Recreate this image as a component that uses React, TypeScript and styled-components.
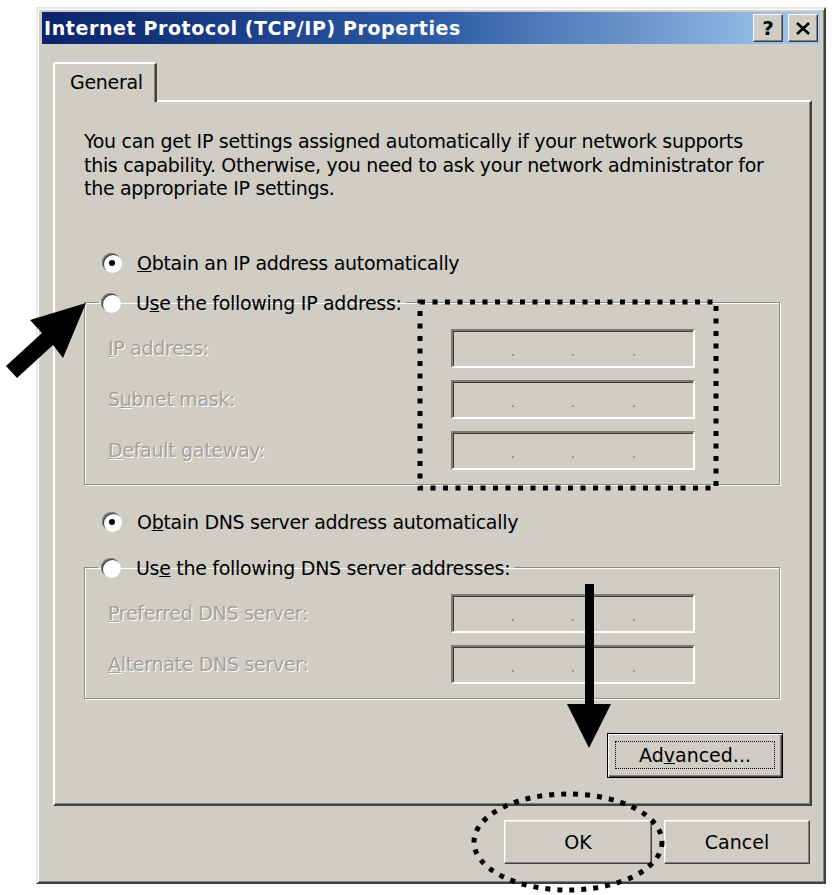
import React from 'react'
import styled, { createGlobalStyle } from 'styled-components'

const GlobalStyle = createGlobalStyle`
    html, body {
        margin: 0;
        padding: 0;
        background: #ffffff;
    }
    body {
        font-family: "DejaVu Sans", "Liberation Sans", Arial, sans-serif;
        color: #000;
    }
`

const face = '#d0cdc5'

const Page = styled.div`
    position: relative;
    width: 832px;
    height: 895px;
    box-sizing: border-box;
    padding: 7px 0 0 36px;
    overflow: hidden;
`

const Window = styled.div`
    width: 790px;
    height: 877px;
    box-sizing: border-box;
    background: ${face};
    border-style: solid;
    border-width: 2px;
    border-color: #ebe9e4 #404040 #404040 #ebe9e4;
    box-shadow: inset 1px 1px 0 #ffffff, inset -1px -1px 0 #808080;
    padding: 3px 4px;
    display: flex;
    flex-direction: column;
`

const TitleBar = styled.div`
    height: 32px;
    display: flex;
    align-items: center;
    padding: 0 2px;
    background: linear-gradient(90deg, #0a246a 0%, #2c5aa4 50%, #a6caf0 100%);
`

const Title = styled.div`
    color: #fff;
    font-weight: bold;
    font-size: 19px;
    letter-spacing: 0.6px;
`

const CaptionButtons = styled.div`
    margin-left: auto;
    display: flex;
    gap: 5px;
`

const CaptionButton = styled.div`
    width: 30px;
    height: 28px;
    box-sizing: border-box;
    background: ${face};
    border-style: solid;
    border-width: 1px;
    border-color: #ffffff #404040 #404040 #ffffff;
    box-shadow: inset -1px -1px 0 #808080;
    display: flex;
    align-items: center;
    justify-content: center;
    font-weight: bold;
    font-size: 20px;
    color: #000;
`

const Body = styled.div`
    flex: 1;
    display: flex;
    flex-direction: column;
    padding: 18px 8px 0 11px;
`

const TabStrip = styled.div`
    display: flex;
    position: relative;
    z-index: 1;
    margin-bottom: -2px;
`

const Tab = styled.div`
    width: 104px;
    height: 40px;
    box-sizing: border-box;
    background: ${face};
    border-style: solid;
    border-width: 2px 2px 0 2px;
    border-color: #ffffff #404040 transparent #ffffff;
    border-radius: 3px 3px 0 0;
    box-shadow: inset -1px 0 0 #808080;
    padding: 7px 0 0 15px;
    font-size: 19px;
    letter-spacing: -0.3px;
`

const Panel = styled.div`
    height: 706px;
    box-sizing: border-box;
    border-style: solid;
    border-width: 2px;
    border-color: #ffffff #404040 #404040 #ffffff;
    box-shadow: inset -1px -1px 0 #808080;
    padding: 28px 30px 0 29px;
    display: flex;
    flex-direction: column;
`

const Description = styled.p`
    margin: 0;
    font-size: 19px;
    line-height: 23.5px;
    letter-spacing: -0.3px;
    white-space: nowrap;
`

const OptionRow = styled.label<{ $top: number }>`
    display: flex;
    align-items: center;
    height: 26px;
    margin-top: ${(p) => p.$top}px;
    padding-left: 18px;
    font-size: 19px;
    letter-spacing: -0.3px;
`

const RadioDot = styled.span<{ $checked?: boolean }>`
    position: relative;
    flex: none;
    width: 19px;
    height: 19px;
    border-radius: 50%;
    background: #ffffff;
    box-shadow: inset 1px 1px 0 #8a8780, inset 2px 2px 0 #404040, 1px 1px 0 #ffffff;
    margin-right: 16px;
    &::after {
        content: '';
        display: ${(p) => (p.$checked ? 'block' : 'none')};
        position: absolute;
        left: 6.5px;
        top: 6.5px;
        width: 6px;
        height: 6px;
        border-radius: 50%;
        background: #000;
    }
`

const GroupBox = styled.fieldset<{ $top: number }>`
    margin: ${(p) => p.$top}px 0 0 0;
    padding: 0;
    border: 1px solid #8e8b84;
    box-shadow: inset 1px 1px 0 #ffffff, 1px 1px 0 #ffffff;
    min-inline-size: auto;
`

const GroupLegend = styled.legend`
    margin-left: 13px;
    padding: 0 4px 0 3px;
    height: 26px;
    display: flex;
    align-items: center;
    font-size: 19px;
    letter-spacing: -0.3px;
`

const FieldGrid = styled.div<{ $bottom: number }>`
    display: grid;
    grid-template-columns: 343px 244px;
    row-gap: 12px;
    align-items: center;
    padding: 13px 0 ${(p) => p.$bottom}px 23px;
`

const FieldLabel = styled.span`
    font-size: 19px;
    letter-spacing: -0.3px;
    color: #a5a199;
    text-shadow: 1px 1px 0 #ffffff;
`

const IpField = styled.div`
    height: 39px;
    box-sizing: border-box;
    border-style: solid;
    border-width: 2px;
    border-color: #7c7a74 #ffffff #ffffff #7c7a74;
    box-shadow: inset 1px 1px 0 #3c3c3c;
    display: flex;
    justify-content: space-evenly;
    align-items: flex-end;
    padding-bottom: 10px;
`

const IpDot = styled.span`
    width: 2px;
    height: 2px;
    background: #9d9990;
`

const ActionRow = styled.div<{ $top: number; $right: number }>`
    display: flex;
    justify-content: flex-end;
    gap: 12px;
    margin-top: ${(p) => p.$top}px;
    margin-right: ${(p) => p.$right}px;
`

const PushButton = styled.button<{ $width: number; $height: number; $focused?: boolean }>`
    position: relative;
    width: ${(p) => p.$width}px;
    height: ${(p) => p.$height}px;
    box-sizing: border-box;
    background: ${face};
    font-family: "DejaVu Sans", "Liberation Sans", Arial, sans-serif;
    font-size: 19px;
    color: #000;
    padding: 0;
    border-style: solid;
    border-width: 1px;
    border-color: ${(p) => (p.$focused ? '#000 #000 #000 #000' : '#ffffff #404040 #404040 #ffffff')};
    box-shadow: ${(p) =>
        p.$focused
            ? 'inset 1px 1px 0 #ffffff, inset -1px -1px 0 #404040, inset -2px -2px 0 #808080'
            : 'inset -1px -1px 0 #808080, inset 1px 1px 0 #e8e6e1'};
`

const FocusRing = styled.span`
    position: absolute;
    inset: 7px 7px 8px 7px;
    border: 1px dotted #000;
`

const Overlay = styled.svg`
    position: absolute;
    left: 0;
    top: 0;
    width: 832px;
    height: 895px;
    pointer-events: none;
`

const Radio = ({ checked, children }: { checked?: boolean; children: React.ReactNode }) => (
    <>
        <RadioDot $checked={checked} />
        <span>{children}</span>
    </>
)

const IpBox = () => (
    <IpField>
        <IpDot />
        <IpDot />
        <IpDot />
    </IpField>
)

const App = () => {
    return (
        <>
            <GlobalStyle />
            <Page>
                <Window>
                    <TitleBar>
                        <Title>Internet Protocol (TCP/IP) Properties</Title>
                        <CaptionButtons>
                            <CaptionButton>?</CaptionButton>
                            <CaptionButton>
                                <svg width="14" height="13" viewBox="0 0 14 13">
                                    <path d="M1 1 L13 12 M13 1 L1 12" stroke="#000" strokeWidth="2.6" />
                                </svg>
                            </CaptionButton>
                        </CaptionButtons>
                    </TitleBar>
                    <Body>
                        <TabStrip>
                            <Tab>General</Tab>
                        </TabStrip>
                        <Panel>
                            <Description>
                                You can get IP settings assigned automatically if your network supports
                                <br />
                                this capability. Otherwise, you need to ask your network administrator for
                                <br />
                                the appropriate IP settings.
                            </Description>

                            <OptionRow $top={49}>
                                <Radio checked>
                                    <u>O</u>btain an IP address automatically
                                </Radio>
                            </OptionRow>

                            <GroupBox $top={14}>
                                <GroupLegend>
                                    <Radio>
                                        U<u>s</u>e the following IP address:
                                    </Radio>
                                </GroupLegend>
                                <FieldGrid $bottom={14}>
                                    <FieldLabel>
                                        <u>I</u>P address:
                                    </FieldLabel>
                                    <IpBox />
                                    <FieldLabel>
                                        S<u>u</u>bnet mask:
                                    </FieldLabel>
                                    <IpBox />
                                    <FieldLabel>
                                        <u>D</u>efault gateway:
                                    </FieldLabel>
                                    <IpBox />
                                </FieldGrid>
                            </GroupBox>

                            <OptionRow $top={24}>
                                <Radio checked>
                                    O<u>b</u>tain DNS server address automatically
                                </Radio>
                            </OptionRow>

                            <GroupBox $top={20}>
                                <GroupLegend>
                                    <Radio>
                                        Us<u>e</u> the following DNS server addresses:
                                    </Radio>
                                </GroupLegend>
                                <FieldGrid $bottom={14}>
                                    <FieldLabel>
                                        <u>P</u>referred DNS server:
                                    </FieldLabel>
                                    <IpBox />
                                    <FieldLabel>
                                        <u>A</u>lternate DNS server:
                                    </FieldLabel>
                                    <IpBox />
                                </FieldGrid>
                            </GroupBox>

                            <ActionRow $top={34} $right={-3}>
                                <PushButton $width={176} $height={45} $focused>
                                    <FocusRing />
                                    Ad<u>v</u>anced...
                                </PushButton>
                            </ActionRow>
                        </Panel>

                        <ActionRow $top={14} $right={2}>
                            <PushButton $width={148} $height={44}>
                                OK
                            </PushButton>
                            <PushButton $width={146} $height={44}>
                                Cancel
                            </PushButton>
                        </ActionRow>
                    </Body>
                </Window>

                <Overlay viewBox="0 0 832 895">
                    <polygon points="86,303 30,320 42,333 6,366 17,378 53,345 63,358" fill="#000" />
                    <rect
                        x="420"
                        y="302"
                        width="296"
                        height="186"
                        fill="none"
                        stroke="#000"
                        strokeWidth="5"
                        strokeDasharray="5 7.5"
                    />
                    <rect x="585" y="584" width="9" height="122" fill="#000" />
                    <polygon points="567,704 611,704 589,748" fill="#000" />
                    <ellipse
                        cx="568"
                        cy="842"
                        rx="94"
                        ry="48"
                        fill="none"
                        stroke="#000"
                        strokeWidth="5"
                        strokeDasharray="5 7"
                    />
                </Overlay>
            </Page>
        </>
    )
}

export default App
